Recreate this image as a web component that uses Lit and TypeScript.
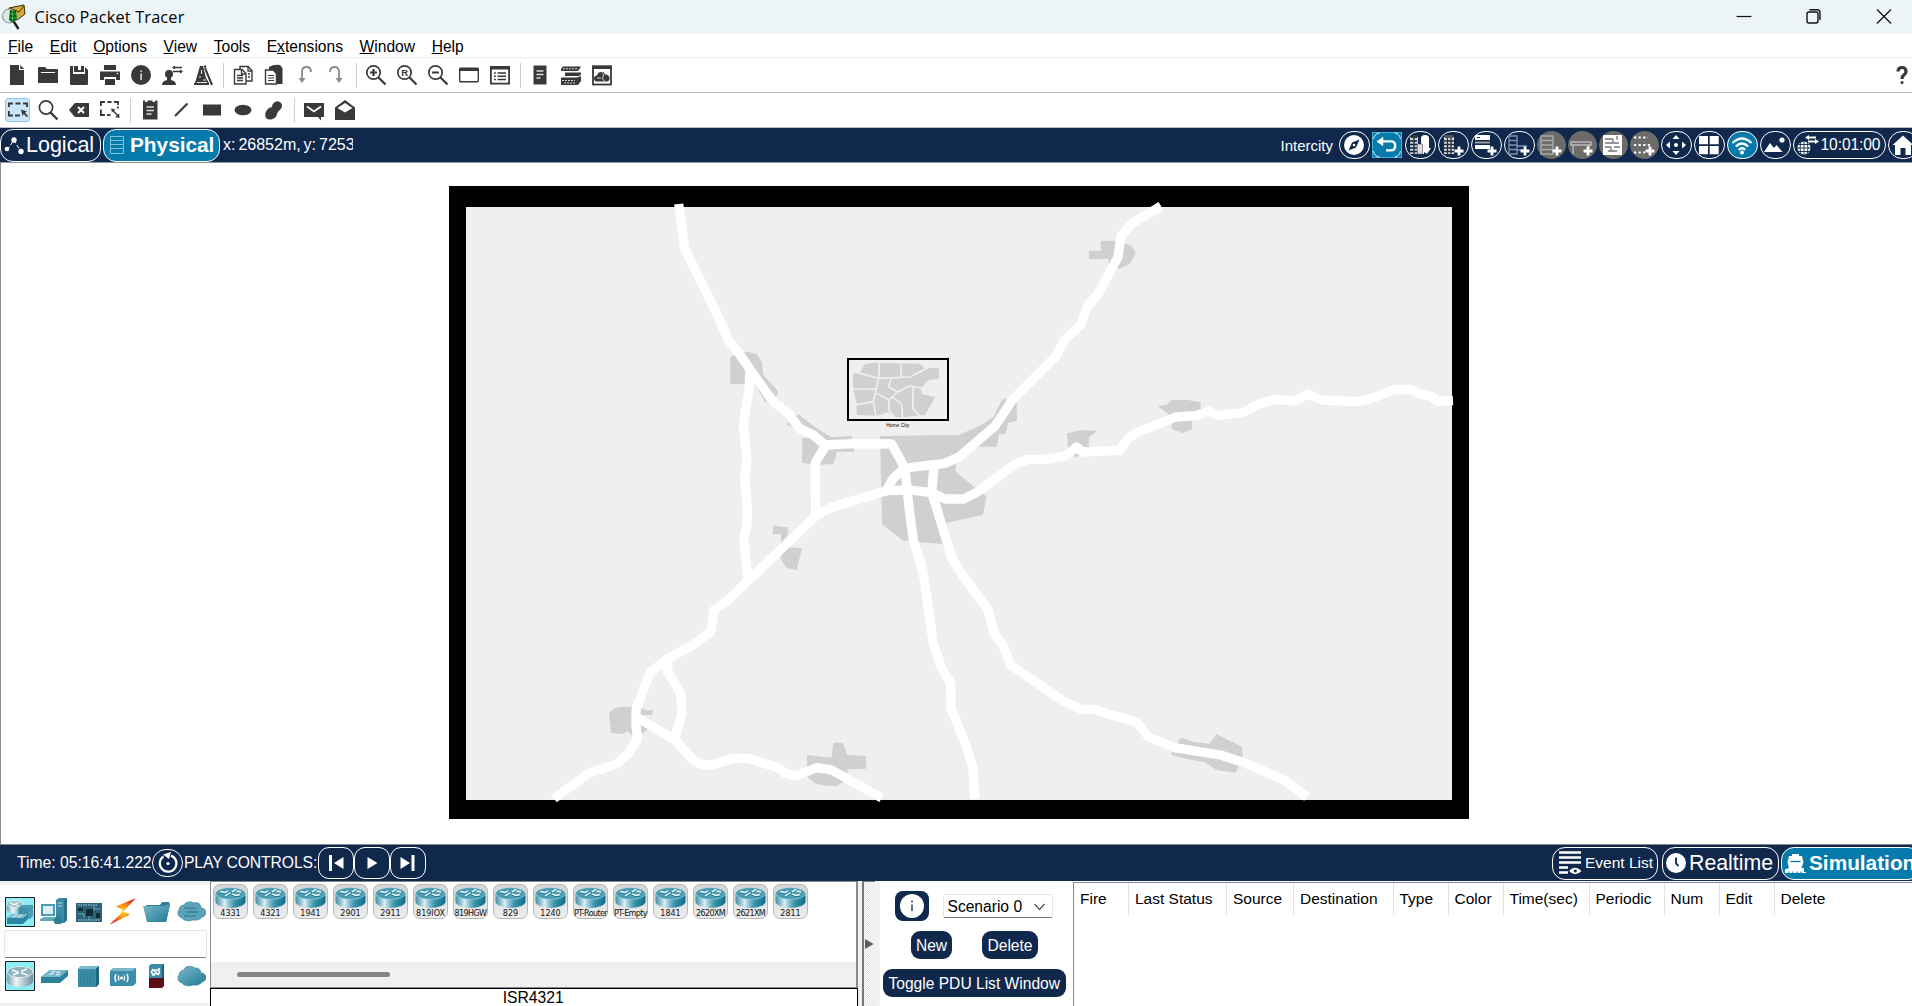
import { LitElement, html, css, svg } from "lit";
import { customElement } from "lit/decorators.js";
import { classMap } from "lit/directives/class-map.js";
import { styleMap } from "lit/directives/style-map.js";

const D = "#39393a";

/* 24x24 toolbar glyphs */
const tool: Record<string, unknown> = {
  file: svg`<path fill=${D} d="M5 2h9v5h5v15H5z"/><path fill=${D} d="M15.3 2l3.9 4h-3.9z"/>`,
  folder: svg`<path fill=${D} d="M2 5q0-1 1-1h6l2 2h10q1 0 1 1v13H2z"/><path stroke="#fff" d="M5 9.5h14"/>`,
  save: svg`<path fill=${D} d="M3 3h3v8h12V4l3 3v14q0 1-1 1H4q-1 0-1-1z"/><path fill=${D} d="M7 3h4v6H7zM14 3h3v6h-3zM11 7h3v2h-3z"/>`,
  print: svg`<path fill=${D} d="M6 2h12v5H6zM2 8.500h20V17h-4v-3H6v3H2zM7 16h10v6H7z"/><circle cx="19.500" cy="10.500" r=".8" fill="#fff"/>`,
  info: svg`<circle cx="12" cy="12" r="10" fill=${D}/><path fill="#ddd" d="M11.300 10.500h1.600V17h-1.600zM11.300 7.500h1.600v1.600h-1.600z"/>`,
  user: svg`<circle cx="9" cy="11" r="4" fill=${D}/><path fill=${D} d="M2 22q0-4 5-5v-3h4v3q5 1 5 5z"/><path stroke=${D} stroke-width="1.400" fill="none" d="M13 4.500h9M13 8.500h9"/><path fill=${D} d="M12 4.500l3-2v4zM23 8.500l-3-2v4z"/>`,
  metro: svg`<path fill=${D} d="M9 3h3l3 12 3 5v2H3v-2h1z"/><path stroke="#fff" stroke-width=".9" d="M10.500 7v4M8 14h2M12 17h3M6 19.500h10"/><path stroke=${D} stroke-width="2" d="M14 5l7 17M13 4l2-1"/>`,
  copy: svg`<g fill="#fff" stroke=${D} stroke-width="1.400"><path d="M9 3.500h8l4 4V18H9z"/><path d="M3.500 6.500H11l4 4V21H3.500z"/></g><path stroke=${D} stroke-width="1.300" fill="none" d="M6 12.500h6M6 15h6M6 17.500h6M10.500 7v4h4M17 4v4h4M17 11h2M17 14h2"/>`,
  paste: svg`<path fill=${D} d="M7 4q5-3 11-2l2.500 3v16H7z"/><path fill="#fff" stroke=${D} stroke-width="1.400" d="M3.500 7H11l3.500 3.500V21h-11z"/><path stroke=${D} stroke-width="1.200" d="M6 12.500h6M6 15h6M6 17.500h6"/>`,
  undo: svg`<path fill="none" stroke="#8a8a8a" stroke-width="1.800" d="M18 9q0-5-4.500-5T9 9v9"/><path fill="#8a8a8a" d="M5.500 15h7L9 20z"/>`,
  redo: svg`<path fill="none" stroke="#8a8a8a" stroke-width="1.800" d="M6 9q0-5 4.500-5T15 9v9"/><path fill="#8a8a8a" d="M11.500 15h7L15 20z"/>`,
  zin: svg`<circle cx="9.500" cy="9.500" r="6.700" fill="none" stroke=${D} stroke-width="1.700"/><path stroke=${D} stroke-width="2.200" d="M14.500 14.500l7 7M6 9.500h7M9.500 6v7"/>`,
  zreset: svg`<circle cx="9.500" cy="9.500" r="6.700" fill="none" stroke=${D} stroke-width="1.700"/><path stroke=${D} stroke-width="2.200" d="M14.500 14.500l7 7"/><text x="9.700" y="13" text-anchor="middle" font-family="Liberation Sans, sans-serif" font-weight="700" font-size="9.500" fill=${D}>R</text>`,
  zout: svg`<circle cx="9.500" cy="9.500" r="6.700" fill="none" stroke=${D} stroke-width="1.700"/><path stroke=${D} stroke-width="2.200" d="M14.500 14.500l7 7M6 9.500h7"/>`,
  win: svg`<rect x="2.700" y="5.200" width="18.600" height="13.600" rx="1" fill="#fff" stroke=${D} stroke-width="1.400"/><path fill=${D} d="M2.500 5h19v3h-19z"/>`,
  list: svg`<rect x="2.900" y="3.900" width="18.200" height="16.700" fill="#fff" stroke=${D} stroke-width="1.800"/><path fill=${D} d="M2 3h20v3.500H2z"/><path stroke=${D} stroke-width="1.500" d="M6 10h1.800M9.500 10h8.500M6 13.200h1.800M9.500 13.200h8.500M6 16.500h1.800M9.500 16.500h8.500"/>`,
  doc: svg`<path fill=${D} d="M5.500 2.500h13v19h-13z"/><path stroke="#ddd" stroke-width="1.300" d="M8.500 8h7M8.500 11.500h7M8.500 15h4"/>`,
  stack: svg`<path fill=${D} d="M4 3.500h18L19 8H2V6zM6 9.500h16v2l-2 1.500H6zM2 14.500h16l4-1.500v5l-3 4H2z"/><path stroke="#fff" stroke-width=".8" d="M4 5.800h14M3 17.500h13M5 20h11" stroke-dasharray="2 1"/>`,
  cloudwin: svg`<rect x="3" y="3.500" width="18" height="18" fill="#fff" stroke=${D} stroke-width="1.800"/><path fill=${D} d="M2 2.500h20v3.500H2z"/><path fill=${D} d="M7 18.500a3 3 0 0 1 0-6 4.500 4.500 0 0 1 8.500-1 3.700 3.700 0 0 1 2 7z"/><path fill="none" stroke="#fff" stroke-width=".8" d="M12 9.500q3 2 1 4t2 5M7 15h4"/>`,
  select: svg`<path fill="none" stroke=${D} stroke-width="1.800" d="M2.900 9V5.500h4M9.500 5.500h5M17 5.500h4.100V9M2.900 13v4.500h4M9 17.500h5"/><path fill=${D} d="M15 11.500l6 2-2 1.200 3 3.300-1.200 1.200-3-3.200-1.300 2z"/>`,
  mag: svg`<circle cx="10" cy="9.500" r="6.600" fill="none" stroke=${D} stroke-width="1.700"/><path stroke=${D} stroke-width="2.400" d="M14.500 14.500l7 7"/>`,
  erase: svg`<path fill=${D} d="M2 12l5-6q.5-1 1.500-1H22v14H8.500q-1 0-1.500-1z"/><path stroke="#fff" stroke-width="2" d="M11 9l6 6M17 9l-6 6"/>`,
  resize: svg`<path fill="none" stroke=${D} stroke-width="1.800" d="M2.900 8V4h4M9.500 4h4M16 4h4.100v3M2.900 11.500V17h4M9 17h3.500"/><path stroke=${D} stroke-width="1.400" d="M14.500 12l6 6.500"/><path fill=${D} d="M13 10.500l4.500.8-3.500 3zM21.500 20l-.3-4.500-4 3.500zM19 8.500h1.800v2H19z"/>`,
  note: svg`<path fill=${D} d="M5 2.500h2V4h2.500V2.500h5V4H17V2.500h2.500v19H5z"/><path stroke="#ddd" stroke-width="1.500" d="M8.500 9h7.500M8.500 12.500h7.500M8.500 16h5"/>`,
  line: svg`<path stroke=${D} stroke-width="2.200" d="M6 18L18.500 5.500"/>`,
  rect: svg`<path fill=${D} d="M3 6.500h18v11H3z"/>`,
  ell: svg`<ellipse cx="12" cy="12" rx="8.500" ry="5.300" fill=${D}/>`,
  free: svg`<path fill=${D} d="M4 20q-2-4 1-8 2-3 5-3 0-4 4-5.500 4-1 5.700 2.500 1 3.500-2 6-2 1-2.500 3.500-.7 4-4.500 5.500t-6.700-1z"/>`,
  mail: svg`<path fill=${D} d="M2 5h20v14h-3v3.500L16 19H2z"/><path stroke="#fff" stroke-width="1.800" fill="none" d="M5 8.500l7 5 7-5"/>`,
  mailopen: svg`<path fill=${D} d="M2 9.500L12 2l10 7.500V22H2z"/><path fill="#fff" d="M4.500 10L12 5l7.500 5L12 14.500z"/>`,
};

const plus = svg`<path stroke="#fff" stroke-width="2.800" d="M19 14.500v9M14.500 19h9"/>`;

/* 26x26 glyphs for the navy bar */
const nav: Record<string, unknown> = {
  compass: svg`<circle cx="13" cy="13" r="10" fill="#fff"/><path fill="#0f284b" d="M18.500 7.500l-3.500 8-7.500 3 3.500-8z"/><circle cx="13" cy="13" r="1.300" fill="#fff"/>`,
  back: svg`<path fill="none" stroke="#fff" d="M-1 6q1-6 6-6.500M21-.500q5 .5 6 6.500M-1 20q1 6 6 6.500M21 26.500q5-.5 6-6.500"/><path fill="none" stroke="#fff" stroke-width="2.600" d="M6 9h11q4.500 0 4.500 5t-4.500 5h-5"/><path fill="#fff" d="M2 9l7-5.500v11z"/>`,
  city: svg`<path fill="#ccc" d="M3 5h8v17H3z"/><path fill="#333" d="M4 3h6v3H4z"/><path stroke="#0f284b" stroke-width="1.300" d="M3 9h7M3 12.500h7M3 16h7M3 19.500h7M7 6v16"/><path fill="#fff" d="M14 22V6q0-3 4-3t4 3v10h2l-4 6-3-2v2z"/><path fill="#ddd" stroke="#555" stroke-width=".6" d="M10.500 12h5v10h-5z"/>`,
  bldg: svg`<path fill="#ddd" d="M4 5h10v17H4z"/><path fill="#555" d="M5 3h8v3H5z"/><path stroke="#222c3c" stroke-width="1.300" d="M4 9h10M4 12.500h10M4 16h10M4 19.500h10M7.500 6v16M11 6v16"/>${plus}`,
  rackplus: svg`<path fill="#fff" d="M2 3h15v5H2zM2 13h15v4H2z"/><path fill="#999" d="M2 9.500h15v2H2z"/><path stroke="#0f284b" d="M4 5.500h3"/>${plus}`,
  closet: svg`<path fill="none" stroke="#7c93b2" stroke-width="1.300" d="M3 4h8v18H3zM3 8.500h8M3 13h8M3 17.500h8M11 14h10M11 18h6"/>${plus}`,
  rackg: svg`<path fill="none" stroke="#aaa" stroke-width="1.400" d="M3 4h12v18H3zM3 8.500h12M3 13h12M3 17.500h12"/>${plus}`,
  table: svg`<path fill="none" stroke="#bbb" stroke-width="1.400" d="M2 10h20v3H2zM4 13v9M20 13v3"/>${plus}`,
  shelf: svg`<path fill="#fff" d="M3 3h19v20H3z"/><path stroke="#777" stroke-width="1.300" fill="none" d="M5 7h8M5 11h14M13 7v4M5 15h6M14 15h6M8 19h9M17 4v4M11 15v4"/>`,
  dots: svg`<path stroke="#fff" stroke-width="2" stroke-dasharray="2.200 2.400" d="M3 5.500h14M3 13h16M3 20.500h11"/>${plus}`,
  move: svg`<circle cx="13" cy="13" r="2" fill="#fff"/><path fill="#fff" d="M13 3l3.500 4h-7zM13 23l3.500-4h-7zM3 13l4-3.500v7zM23 13l-4-3.500v7z"/>`,
  grid: svg`<path fill="#fff" d="M3 4h9v8.300H3zM13.700 4h9v8.300h-9zM3 14h9v8.300H3zM13.700 14h9v8.300h-9z"/>`,
  wifi: svg`<g fill="none" stroke="#fff" stroke-width="2.400"><path d="M3.500 11q9.500-9 19 0M6.800 14.500q6.200-6 12.400 0M9.800 17.800q3.200-3 6.400 0"/></g><circle cx="13" cy="20.500" r="2" fill="#fff"/>`,
  pic: svg`<path fill="#fff" d="M2 20l6-9 4 5 2.500-3 6 7z"/><circle cx="20" cy="8" r="2.600" fill="#fff"/>`,
};

interface Btn { k: string; c?: string }
const navBtns: Btn[] = [
  { k: "compass" }, { k: "back", c: "back" }, { k: "city" }, { k: "bldg" }, { k: "rackplus" }, { k: "closet" },
  { k: "rackg", c: "gray" }, { k: "table", c: "gray" }, { k: "shelf", c: "gray" }, { k: "dots", c: "gray" },
  { k: "move" }, { k: "grid" }, { k: "wifi", c: "on" }, { k: "pic" },
];

const grads = svg`<defs>
  <linearGradient id="cyl"><stop offset="0" stop-color="#3e8fa6"/><stop offset=".3" stop-color="#d5edf2"/><stop offset=".62" stop-color="#3d94ab"/><stop offset="1" stop-color="#0f6f8c"/></linearGradient>
  <linearGradient id="bx" x2="1" y2="1"><stop offset="0" stop-color="#7db9cb"/><stop offset="1" stop-color="#1f7896"/></linearGradient>
  <linearGradient id="cylg"><stop offset="0" stop-color="#7d9aa6"/><stop offset=".35" stop-color="#eef6f8"/><stop offset="1" stop-color="#6c8f9d"/></linearGradient>
</defs>`;

const arrows = svg`<path fill="none" stroke="#f2fbfd" stroke-width="1.500" d="M5 5l5 1.200 3-1.800M21 3l-4 2.600M26 5.500l-5-1.200M10 9.500l5-2.800M17 7.500l4 1.500 4-.8"/><path fill="none" stroke="#0b5468" stroke-width=".6" d="M5 6.200l5 1.200 3-1.800M17 6.800l5-3M10 10.600l5-2.800M17 8.700l4 1.500 4-.8"/>`;

const dev: Record<string, unknown> = {
  network: svg`<path fill="url(#cylg)" d="M2 7v6a8 3.500 0 0 0 16 0V7z"/><ellipse cx="10" cy="7" rx="8" ry="3.500" fill="#9fbfca" stroke="#fff" stroke-width=".6"/><path stroke="#fff" d="M5 6l9 3M6 8.500l8-3"/><path fill="#4a9db4" d="M13 11l4-3h11v11l-3 3H13z"/><path stroke="#2b7189" stroke-width=".8" d="M16 11v10M19 11v10M22 11v10"/><path fill="#2d86a1" d="M2 21l6-4h15v5l-5 5H2z"/><path fill="#7dbccd" d="M2 21l6-4h15l-5 4z"/><path stroke="#e8f6f9" d="M8 20l4-2M13 20l4-2"/>`,
  pc: svg`<path fill="#3a8ca6" d="M17 3l3-2h8v22l-3 3h-8z"/><path fill="#2c6f87" d="M25 3l3-2v22l-3 3z"/><path stroke="#c9e4ec" stroke-width=".8" d="M18.500 6h5M18.500 9h5"/><path fill="#4b9ab2" d="M2 7h14v12H2z"/><path fill="#d8eef4" d="M4 9h10v8H4z"/><path fill="#62a9be" d="M1 22l4-2h12l-3 4H1z"/><path fill="#2d7d97" d="M14 23l5-5 5 5-2 4h-6z"/>`,
  board: svg`<path fill="#2b6478" d="M2 6h26v19H2z"/><path stroke="#b5d8e2" stroke-width="1" stroke-dasharray="1.500 1" d="M4 8h20M4 23h22"/><path fill="#152b38" d="M12 12h7v7h-7zM4 11h5v3H4zM22 16h4v5h-4z"/><path stroke="#7db3c4" stroke-width=".8" fill="none" d="M4 17h6v4M19 12h7M20 9v3M15 19v4"/>`,
  bolt: svg`<defs><radialGradient id="fire"><stop offset="0" stop-color="#ffe11c"/><stop offset=".5" stop-color="#fb8a17"/><stop offset="1" stop-color="#e5321c"/></radialGradient></defs><path fill="url(#fire)" d="M28 1L8 9.500l7 3.500-3 4.500L1 28l21-10.500-7-3 5-5z"/>`,
  folder: svg`<path fill="#2f7e97" d="M4 8h14l2-3h7l1 3-4 17H5z"/><path fill="url(#bx)" d="M1 9h20l7-2-4 18H5z"/>`,
  cloudx: svg`<path fill="#5aa3b9" stroke="#3b8299" stroke-width=".6" d="M6 21a5 5 0 0 1-3-8 5 5 0 0 1 5-5 6 4 0 0 1 10-2 5 5 0 0 1 7 5 4.500 4.500 0 0 1 1 9 8 5 0 0 1-9 3 7 4 0 0 1-11-2z"/><path stroke="#2a6c84" d="M8 11h12M10 15h12M8 19h12"/>`,
  router: svg`<path fill="url(#cylg)" d="M2 11v9a13 6 0 0 0 26 0v-9z"/><ellipse cx="15" cy="11" rx="13" ry="5.500" fill="#8fb3bf" stroke="#f6fbfc" stroke-width=".7"/><path stroke="#fff" stroke-width="1.500" fill="none" d="M7 9l6 2M22 8l-6 2.500M8 14l6-2.500M16 12l7 2"/>`,
  sw: svg`<path fill="#2f829c" d="M2 16l9-7h18v6l-8 7H2z"/><path fill="#77b5c8" d="M2 16l9-7h18l-8 7z"/><path stroke="#eaf7fa" stroke-width="1.200" d="M10 13.500l5-1M17 11.500l4-1M12 11l4-.5M17 14l4-1"/>`,
  hub: svg`<path fill="#3c8ea8" d="M4 8l3-3h18v18l-3 3H4z"/><path fill="#7dbaca" d="M4 8l3-3h18l-3 3z"/><path fill="#206680" d="M22 8l3-3v18l-3 3z"/><path stroke="#2c7892" stroke-width=".9" d="M7 10v14M10 10v14M13 10v14M16 10v14M19 10v14"/>`,
  ap: svg`<path fill="#3c8ea8" d="M2 10l3-3h23v15l-3 3H2z"/><path fill="#78b7c9" d="M2 10l3-3h23l-3 3z"/><g fill="none" stroke="#fff" stroke-width="1.400"><path d="M8 13q-2 4 0 8M11 14.500q-1.300 2.500 0 5M16 14.500q1.300 2.500 0 5M19 13q2 4 0 8"/></g><circle cx="13.500" cy="17" r="1.500" fill="#fff"/>`,
  fw: svg`<path fill="#3c8ea8" d="M7 5l2-2h13v14H7z"/><path fill="#5e0f16" d="M7 17h15v8l-2 2H7z"/><path fill="#1f6078" d="M20 5l2-2v14h-2z"/><ellipse cx="13.500" cy="11" rx="4" ry="2" fill="none" stroke="#fff" stroke-width="1.500"/><path stroke="#fff" stroke-width="1.500" d="M10 8l7 6M16 8h2M10 14h3"/>`,
  cloud: svg`<path fill="url(#bx)" stroke="#3b8299" stroke-width=".6" d="M6 22a5 5 0 0 1-3-8 5 5 0 0 1 5-5 6 4 0 0 1 11-2 5 5 0 0 1 6 5 4.500 4.500 0 0 1 1 9 8 5 0 0 1-9 3 7 4 0 0 1-11-2z"/>`,
};

const models = ["4331", "4321", "1941", "2901", "2911", "819IOX", "819HGW", "829", "1240", "PT-Router", "PT-Empty", "1841", "2620XM", "2621XM", "2811"];
const columns: [string, number][] = [["Fire", 55], ["Last Status", 98], ["Source", 67], ["Destination", 99.5], ["Type", 55], ["Color", 55], ["Time(sec)", 86], ["Periodic", 75], ["Num", 55], ["Edit", 55], ["Delete", 100]];
const menus: [string, string, string][] = [["", "F", "ile"], ["", "E", "dit"], ["", "O", "ptions"], ["", "V", "iew"], ["", "T", "ools"], ["E", "x", "tensions"], ["", "W", "indow"], ["", "H", "elp"]];

const roads = [
  "678.700 204 684.700 248.300 706.700 293.300 718.300 316.700 728.300 340 736.700 350 755 376.700 773.300 401.700 788.300 413.300 799.300 428.300 813.300 435 825 445 853.300 443.700 891.700 444 905 468.300 907.300 490 909.300 510 913.300 540 923.300 573.300 933.300 643.300 941.700 668.300 950.700 683.300 951 708.300 965.800 745 972.700 766.700 975 799",
  "1161 206 1132.800 223 1121 236 1118 257 1098.400 293.300 1087.400 306.700 1080.500 325 1064.700 340 1055.400 356.700 1012.300 400 995 426 959 457 945 463.300 905 468 893.300 478.300 886.700 490",
  "1453 400.500 1437.600 401.300 1430.700 396 1420.400 394 1410 389.300 1394.500 389.500 1368.700 399.300 1356.700 401.700 1322.200 400 1307.800 394 1294.700 401 1275.700 399.300 1258.500 404 1243 412.700 1217.200 415.500 1208.600 411 1196.500 415.700 1175.900 417 1136.300 433 1127.700 439.300 1119.800 450.300 1082.900 452 1076.400 447 1065.700 456 1046.700 459.300 1027.800 459.300 1015.800 464 977.900 491.700 964 499 945 499 931.700 492.700 910 490 886.700 490.700 850 501.700 830 508 815.700 516 746.700 582 728.300 600 714 610 710.700 631.700 690 646.700 666.700 659.300 650 672.700 636 710 636 726.700 637.700 738.300 628.300 753.300 616.700 764 588.300 773.300 554 798.500",
  "750 368.300 749.300 386.700 743.300 425 747 458.300 744.700 476.700 747.300 510 747 525 743.700 538.300 748 580",
  "825 446.700 815.300 462.700 815.700 515",
  "934 466.700 931.700 493.300 936.300 507 943.300 530 952.700 560 962.400 575 988.200 610 993.400 631.700 1003.700 646.700 1010.600 665 1064 701.700 1081.200 709.300 1093.200 709.300 1108.700 714.300 1136.300 721.700 1148.300 736.700 1174.200 747.700 1220.600 755 1243 762.300 1284.400 780 1307 797",
  "667.700 660 667.700 671.700 680.700 693.300 682 713.300 675 738",
  "638.300 718.300 675 740 693.300 760 703.300 765 711.700 765 733.300 758.300 748.300 758.300 778.300 767.700 785 773.300 796 776 816.700 767.700 831.700 770 881.700 798",
];

const towns = [
  "730 357.300 735 355 746.700 351.700 756.700 354 762.300 363.300 763.300 375 777.700 390.700 777.700 395 768.300 401.700 765 401.700 753 381.700 748.300 384 730 384",
  "786 424.300 798.300 414.300 816.700 428.300 831.700 437.300 851.700 436 854.300 451.700 837.300 451.700 833.300 464 816.700 465 802 462.700 802 438.300 813.300 436.700 798.300 430",
  "880 436 959 435 981 425 993.400 416.700 1002 400 1004.400 398.300 1016.800 403 1016.800 420.700 1008.200 423.300 1005.400 434 999.200 434 996.800 446.700 976 446.700 956.500 460 955.500 471.700 976 488.300 986.500 496.700 983 515 946.900 522.700 942.300 544 903.300 540.700 882 524",
  "1088.800 250.700 1100.800 250.700 1100.800 240.700 1117.300 240.700 1132 246 1135.600 254 1129.400 264 1119 269 1108.700 263.300 1108.700 259 1088.800 259",
  "1157.600 406 1167.300 404.700 1171.400 400 1186.200 399.700 1200.700 402.300 1200.700 410 1192 418 1192 429.300 1183 433 1171.700 429.300 1171.700 417.300 1165.500 411.700",
  "1067 433.300 1081.200 430 1097 431 1088.800 437.700 1089 448.300 1076 458 1068 448.300",
  "773 525.700 787.700 527.300 787.700 535 783.300 546.700 802 548.300 796.700 570 786 567.700 780.700 558.300 781 534 773 534",
  "609 713.300 613.300 708.700 620 706.700 640 707 645 710 652.700 710 652.700 715 643.300 715 648.700 728.300 641.700 734.300 631.700 735 627.300 731 623.300 734 611 732.700",
  "807 755 831.700 757.700 833.300 742.700 842.700 742.700 847.300 755 866 756 866 768.700 847.300 769.300 847.300 779.300 836.700 786 825 785.700 815 783.300 807 776.700",
  "1171.400 752.700 1181 737.700 1194.800 742.300 1209.600 743.700 1216.500 734 1242 746.700 1243 758.300 1235.500 772.700 1216.500 770 1205 762.300 1188 759.300 1171.400 755",
];

@customElement("pt-map")
class PtMap extends LitElement {
  static styles = css`
    :host { display: block; }
    svg { display: block; }
    .road { fill: none; stroke: #fff; stroke-width: 9.300; stroke-linejoin: round; }
    .town { fill: #d0d0d0; }
    .street { fill: none; stroke: #efefef; stroke-width: 5; }
  `;
  render() {
    return html`<svg width="1911" height="681" viewBox="1 163 1911 681">
      <rect x="449" y="186" width="1020" height="633" fill="#000"/>
      <rect x="466" y="207" width="986" height="593" fill="#efefef"/>
      ${towns.map((p) => svg`<polygon class="town" points=${p}/>`)}
      ${roads.map((p) => svg`<polyline class="road" points=${p}/>`)}
      <rect x="848" y="359" width="100" height="61" fill="#efefef" stroke="#000" stroke-width="2"/>
      <g transform="translate(440 180) scale(.33333)">
        <polygon class="town" points="1258,578 1275,553 1300,548 1438,551 1455,565 1497,563 1497,597 1465,600 1442,627 1447,642 1485,652 1455,705 1385,712 1362,711 1345,697 1310,708 1250,704 1250,672 1240,628 1238,582"/>
        <path class="street" d="M1318 546L1316 595M1382 548L1384 591M1250 577L1316 595L1410 591L1466 562M1236 627H1308M1316 595L1300 665L1248 674M1300 665L1308 710M1355 593L1345 620L1372 636L1408 618L1446 624M1372 636L1347 660L1310 640M1347 660L1348 692L1365 713M1358 652L1385 672L1388 714M1420 620L1418 685L1440 708"/>
      </g>
      <text x="897.700" y="427.200" text-anchor="middle" font-family="Liberation Sans, sans-serif" font-size="4.900" fill="#000">Home City</text>
    </svg>`;
  }
}

@customElement("app-root")
class AppRoot extends LitElement {
  static styles = css`
    :host { display: block; width: 1912px; height: 1006px; overflow: hidden; background: #fff; color: #000;
      font: 15.600px "Liberation Sans", Arial, sans-serif; }
    * { box-sizing: border-box; }
    svg { display: block; flex: none; }
    .app { display: flex; flex-direction: column; height: 1006px; white-space: nowrap; }
    .title { height: 34px; flex: none; background: #edf4f8; display: flex; align-items: center; padding-left: 2px; }
    .name { font-family: "Open Sans", "Noto Sans", sans-serif; font-size: 16.300px; letter-spacing: .18px; padding: 0 0 0 8.500px; flex: 1; }
    .wbtns { display: flex; gap: 50px; padding-right: 18.500px; }
    .menu { height: 24px; flex: none; display: flex; gap: 16.600px; padding-left: 8px; font-size: 15.600px; line-height: 25px; border-bottom: 1px solid #ededed; }
    .tools { height: 35px; flex: none; display: flex; align-items: center; padding-left: 1.500px; border-bottom: 1px solid #bdbdbd; }
    .cell { width: 31px; height: 24px; display: flex; justify-content: center; align-items: center; }
    .cell.sel { width: 25px; height: 24px; margin: 0 2.500px 0 3.500px; background: #c9e6fb; border: 1px solid #8dc6ee; border-radius: 3px; }
    .sep { width: 1px; height: 25px; margin: 0 4px; background: #cfcfcf; }
    .grow { flex: 1; }
    .nav { height: 35px; flex: none; display: flex; align-items: center; background: #0f284b; color: #fff; border-bottom: 1px solid #8d939b; }
    .tab { height: 33px; border: 1px solid #fff; border-radius: 13px; display: flex; align-items: center; font-size: 21.300px; flex: none; background: #0f284b; color: #fff; }
    .tab.on { background: #057aab; font-weight: 700; font-size: 20.800px; }
    .lg { width: 101px; padding-left: 3px; gap: 2px; margin-right: 2px; font-size: 21.500px; }
    .ph { width: 117px; padding-left: 5px; gap: 5px; }
    .coord { width: 129.500px; margin-left: 3px; overflow: hidden; font-size: 16px; word-spacing: -1.500px; flex: none; }
    .place { width: 57px; font-size: 15px; flex: none; }
    .slot { width: 33px; display: flex; justify-content: center; flex: none; }
    .slot.gray { width: 31px; }
    .rb { width: 31px; height: 28px; border: 1px solid #fff; border-radius: 14px; display: flex; align-items: center; justify-content: center; flex: none; }
    .rb.gray { background: #6d6b69; border-color: #6d6b69; width: 29px; }
    .rb.on { background: #057aab; }
    .rb.back { background: #057aab; border-radius: 0; width: 30px; height: 26px; border-color: #3fb4de; }
    .rb.back svg { overflow: visible; transform: scale(.96, .88); }
    .clock { width: 93px; height: 28px; border: 1px solid #fff; border-radius: 14px; display: flex; align-items: center; margin-left: 1px; padding-left: 1px; gap: 2px; flex: none; letter-spacing: -.1px; }
    .home { margin: 0 -6.500px 0 2px; width: 31px; }
    .clip { overflow: hidden; }
    .canvas { height: 681px; flex: none; border-left: 1px solid #8d8d8d; background: #fff; }
    .bar2 { height: 37px; border-top: 1px solid #858b93; border-bottom: 0; overflow: hidden; }
    .time { width: 135px; margin-left: 17px; font-size: 15.700px; }
    .play { width: 134px; margin-left: 1px; font-size: 15.700px; letter-spacing: -.1px; }
    .pb { width: 36px; height: 32px; border: 1px solid #fff; border-radius: 11px; display: flex; align-items: center; justify-content: center; flex: none; }
    .ev { width: 106px; font-size: 15.500px; padding-left: 5px; gap: 3px; margin-right: 4px; }
    .rt { width: 117px; padding-left: 2px; gap: 2px; margin-right: 2px; }
    .sim { width: 140px; padding-left: 3px; gap: 3px; margin-right: -9px; }
    .bottom { flex: 1; display: flex; min-height: 0; }
    .cats { width: 210px; flex: none; border-top: 4px solid #f0f0f0; border-bottom: 3px solid #f0f0f0; }
    .drow { display: flex; padding: 12px 0 3px 3.200px; }
    .drow.two { padding-top: 3px; }
    .d { width: 34.200px; display: flex; justify-content: center; }
    .d div { width: 30px; height: 30px; }
    .d div.sel { background: #8ceef4; outline: 1px solid #222; outline-offset: -1px; }
    .search { width: 203px; height: 28px; margin-left: 3.500px; border: 1px solid #e4e4e4; border-bottom: 1px solid #808080; border-radius: 2px; }
    .list { width: 647.500px; flex: none; display: flex; flex-direction: column; }
    .models { height: 107px; flex: none; border: 1px solid #858b93; border-right-width: 2px; display: flex; flex-direction: column; justify-content: space-between; }
    .tiles { display: flex; gap: 5px; padding: 2px 0 0 2px; }
    .tile { width: 35px; height: 35px; border: 1px solid #b7b7b7; border-radius: 7px; background: linear-gradient(#d6d6d6, #eee); display: flex; flex-direction: column; align-items: center; }
    .tl { font: 8px/9px "DejaVu Sans", sans-serif; letter-spacing: 0; color: #111; }
    .tl.long { letter-spacing: -.6px; }
    .track { height: 25px; background: #f0f0f0; padding: 10px 0 0 26px; }
    .thumb { width: 153px; height: 5px; border-radius: 3px; background: #868686; }
    .mname { flex: 1; min-height: 0; overflow: hidden; border: solid #000; border-width: 1px 1px 0 1px; text-align: center; font-size: 15.700px; line-height: 18px; padding-right: 1px; }
    .splitgap { width: 4.500px; background: #f0f0f0; flex: none; }
    .split { width: 13px; border-left: 2px solid #777; border-top: 1px solid #777; background: repeating-conic-gradient(#e6e6e6 0 25%, #fbfbfb 0 50%) 0 0 / 2px 2px; flex: none; padding: 56px 0 0 1px; }
    .gap2 { width: 5px; background: #f2f2f2; flex: none; }
    .scen { width: 193px; flex: none; display: flex; flex-direction: column; }
    .r1 { display: flex; padding: 10px 0 0 15px; gap: 13.500px; height: 40px; align-items: flex-start; }
    .infob { width: 34px; height: 30px; border-radius: 8px; background: #0f284b; display: flex; align-items: center; justify-content: center; }
    .selb { margin-top: 3px; width: 110px; height: 24px; border: 1px solid #e6e6e6; border-bottom: 1px solid #777; border-radius: 2px; display: flex; align-items: center; justify-content: space-between; padding: 1px 6px 0 4px; }
    .btn { height: 28px; border-radius: 9px; background: #0f284b; color: #fff; display: flex; align-items: center; justify-content: center; padding-top: 1px; }
    .r2 { display: flex; gap: 30px; padding: 10px 0 10px 31px; }
    .bn { width: 41px; }
    .bd { width: 56px; }
    .bt { width: 182.500px; margin-left: 3px; }
    .table { flex: 1; border-left: 1px solid #7f8799; border-top: 1px solid #7f8799; margin-top: 1px; display: flex; align-items: flex-start; overflow: hidden; min-width: 0; }
    .th { height: 32px; line-height: 32px; padding-left: 6px; border-right: 1px solid #e2e2e2; flex: none; font-size: 15.500px; }
    .th:last-child { border-right: 0; }
  `;

  private cell(k: string, sel = false) {
    return html`<div class=${classMap({ cell: true, sel })}><svg width="24" height="24" viewBox="0 0 24 24">${tool[k]}</svg></div>`;
  }
  private cells(keys: string[]) {
    return keys.map((k) => (k === "|" ? html`<div class="sep"></div>` : this.cell(k, k === "select")));
  }
  private devs(keys: string[]) {
    return keys.map((k, i) => html`<div class="d"><div class=${i === 0 ? "sel" : ""}><svg width="30" height="30" viewBox="0 0 30 30">${grads}${dev[k]}</svg></div></div>`);
  }

  render() {
    return html`<div class="app">
      <div class="title">
        <svg width="24" height="26" viewBox="0 0 24 26"><path fill="#d8ab35" stroke="#3a2a0a" d="M7 4l15-3 1 9-8 6-8-3z"/><path stroke="#3a2a0a" fill="none" d="M8 4l9 4 5-6"/><circle cx="7.500" cy="12" r="7" fill="#dfe9e6" stroke="#8fa39c" stroke-width="1.200"/><path fill="#0d5a1d" d="M8 6l6 1 1 8-4 4-4-3z"/><path stroke="#35e04f" stroke-width=".7" d="M8 10h7M8 14h7M10.500 7v10"/><path stroke="#1d1d1d" stroke-width="2.400" d="M12 18l4.500 7"/></svg>
        <div class="name">Cisco Packet Tracer</div>
        <div class="wbtns">
          <svg width="20" height="20" viewBox="0 0 20 20"><path stroke="#111" stroke-width="1.200" d="M2.500 9.500h15"/></svg>
          <svg width="20" height="20" viewBox="0 0 20 20"><rect x="3" y="5" width="11" height="11" rx="2" fill="none" stroke="#111" stroke-width="1.400"/><path fill="none" stroke="#111" stroke-width="1.400" d="M5.500 2.800H13a3 3 0 0 1 3 3V13"/></svg>
          <svg width="20" height="20" viewBox="0 0 20 20"><path stroke="#111" stroke-width="1.300" d="M3 2.500l14 14M17 2.500l-14 14"/></svg>
        </div>
      </div>
      <div class="menu">${menus.map(([a, u, b]) => html`<span>${a}<u>${u}</u>${b}</span>`)}</div>
      <div class="tools">
        ${this.cells(["file", "folder", "save", "print", "info", "user", "metro", "|", "copy", "paste", "undo", "redo", "|", "zin", "zreset", "zout", "win", "list", "|", "doc", "stack", "cloudwin"])}
        <div class="grow"></div>
        <svg width="20" height="24" viewBox="0 0 20 24"><path fill="none" stroke=${D} stroke-width="3.200" d="M6 8.500q0-4 4-4t4 4q0 2-2 3.300t-2 4.200"/><circle cx="10" cy="19.500" r="1.600" fill=${D}/></svg>
      </div>
      <div class="tools">
        ${this.cells(["select", "mag", "erase", "resize", "|", "note", "line", "rect", "ell", "free", "|", "mail", "mailopen"])}
      </div>
      <div class="nav clip">
        <div class="tab lg"><svg width="20" height="22" viewBox="0 0 20 22"><path stroke="#fff" fill="none" d="M3 16l7-10 7 12" stroke-dasharray="4 2"/><circle cx="3" cy="15" r="2.300" fill="#fff"/><circle cx="10" cy="6" r="2.700" fill="#fff"/><circle cx="17" cy="17.500" r="2.700" fill="#fff"/></svg><span>Logical</span></div>
        <div class="tab on ph"><svg width="16" height="20" viewBox="0 0 16 20"><path fill="none" stroke="#7cc4dd" d="M1.500 1.500h13v17h-13zM1.500 5.500h13M1.500 9.500h13M1.500 13.500h13"/></svg><span>Physical</span></div>
        <div class="coord">x: 26852m, y: 7253</div>
        <div class="grow"></div>
        <div class="place">Intercity</div>
        ${navBtns.map((b) => html`<div class=${classMap({ slot: true, gray: b.c === "gray" })}><div class=${"rb " + (b.c ?? "")}><svg width="26" height="26" viewBox="0 0 26 26">${nav[b.k]}</svg></div></div>`)}
        <div class="clock"><svg width="24" height="24" viewBox="0 0 24 24"><circle cx="9" cy="15" r="6.500" fill="#fff"/><path fill="none" stroke="#0f284b" stroke-width=".9" d="M2 15h14M3 11.500h12M3 18.500h12M9 8v14M6 8.500q-2 6.500 0 13M12 8.500q2 6.500 0 13"/><path stroke="#fff" stroke-width="1.800" d="M12 4.500h9M13 8.500h9"/><path fill="#fff" d="M10 4.500l4-2.500v5zM24 8.500L20 6v5z"/></svg><span>10:01:00</span></div>
        <div class="rb home"><svg width="26" height="26" viewBox="0 0 26 26"><path fill="#fff" d="M2.500 13L13 3.500 23.500 13H21v10h-5.500v-7h-5v7H5V13z"/></svg></div>
      </div>
      <div class="canvas"><pt-map></pt-map></div>
      <div class="nav bar2">
        <div class="time">Time: 05:16:41.222</div>
        <div class="rb"><svg width="26" height="26" viewBox="0 0 26 26"><path fill="none" stroke="#fff" stroke-width="2.200" d="M8.500 6.500A8.300 8.300 0 1 0 16 5.600"/><path fill="#fff" d="M8 4.500l8-2.500-2 7z"/><circle cx="13" cy="13.500" r="1.600" fill="#fff"/></svg></div>
        <div class="play">PLAY CONTROLS:</div>
        <div class="pb"><svg width="18" height="18" viewBox="0 0 18 18"><path fill="#fff" d="M2 1h3v16H2zM16.500 3v12L7 9z"/></svg></div>
        <div class="pb"><svg width="18" height="18" viewBox="0 0 18 18"><path fill="#fff" d="M4.500 3l10 6-10 6z"/></svg></div>
        <div class="pb"><svg width="18" height="18" viewBox="0 0 18 18"><path fill="#fff" d="M1.500 3l9.500 6-9.500 6zM12.500 1h3v16h-3z"/></svg></div>
        <div class="grow"></div>
        <div class="tab ev"><svg width="24" height="26" viewBox="0 0 24 26"><path stroke="#fff" stroke-width="2.300" d="M1 2.500h22M1 7.500h22M1 12.500h22M1 17.500h9M1 22.500h9"/><path fill="#fff" d="M11 21q6-6.500 12.500 0-6.500 6.500-12.500 0z"/><circle cx="17.300" cy="21" r="1.600" fill="#0f284b"/></svg><span>Event List</span></div>
        <div class="tab rt"><svg width="22" height="22" viewBox="0 0 22 22"><circle cx="11" cy="11" r="10" fill="#fff"/><path fill="none" stroke="#0f284b" stroke-width="1.800" d="M11 5.500v6l2.500 2.500"/></svg><span>Realtime</span></div>
        <div class="tab on sim"><svg width="21" height="22" viewBox="0 0 21 22"><path fill="#fff" d="M7 2h7v2h3l1.500 6-2 6h2.500v4H21v1H0v-4h2.500v-1H4L2.500 10 4 4h3z"/><path stroke="#057aab" stroke-width="1.300" d="M5.500 9.500h10"/><path stroke="#057aab" stroke-width="1" d="M4 21.500v-2M8 21.500v-2M12 21.500v-2M16 21.500v-2"/></svg><span>Simulation</span></div>
      </div>
      <div class="bottom">
        <div class="cats">
          <div class="drow">${this.devs(["network", "pc", "board", "bolt", "folder", "cloudx"])}</div>
          <div class="search"></div>
          <div class="drow two">${this.devs(["router", "sw", "hub", "ap", "fw", "cloud"])}</div>
        </div>
        <div class="list">
          <div class="models">
            <div class="tiles">${models.map((m) => html`<div class="tile"><svg width="31" height="24" viewBox="0 0 31 24">${grads}<path fill="url(#cyl)" d="M.500 8.500v8a15 6.500 0 0 0 30 0v-8z"/><ellipse cx="15.500" cy="8.500" rx="15" ry="6" fill="#4c9db3" stroke="#cfe8ee" stroke-width=".5"/><g transform="translate(0 1.500)">${arrows}</g></svg><span class=${classMap({ tl: true, long: m.length > 5 && m !== "819IOX" })}>${m}</span></div>`)}</div>
            <div class="track"><div class="thumb"></div></div>
          </div>
          <div class="mname">ISR4321</div>
        </div>
        <div class="splitgap"></div>
        <div class="split"><svg width="10" height="12" viewBox="0 0 10 12"><path fill="#5d5d5d" d="M0 1l8.500 5L0 11z"/></svg></div>
        <div class="gap2"></div>
        <div class="scen">
          <div class="r1">
            <div class="infob"><svg width="26" height="26" viewBox="0 0 26 26"><circle cx="13" cy="13" r="12" fill="#fff"/><path fill="#5b6b8c" d="M12 11.500h2V18h-2zM12 7.500h2v2h-2z"/></svg></div>
            <div class="selb"><span>Scenario 0</span><svg width="13" height="8" viewBox="0 0 13 8"><path fill="none" stroke="#555" stroke-width="1.300" d="M1.500 1l5 5.500 5-5.500"/></svg></div>
          </div>
          <div class="r2"><div class="btn bn">New</div><div class="btn bd">Delete</div></div>
          <div class="btn bt">Toggle PDU List Window</div>
        </div>
        <div class="table">${columns.map(([n, w]) => html`<div class="th" style=${styleMap({ width: w + "px" })}>${n}</div>`)}</div>
      </div>
    </div>`;
  }
}
